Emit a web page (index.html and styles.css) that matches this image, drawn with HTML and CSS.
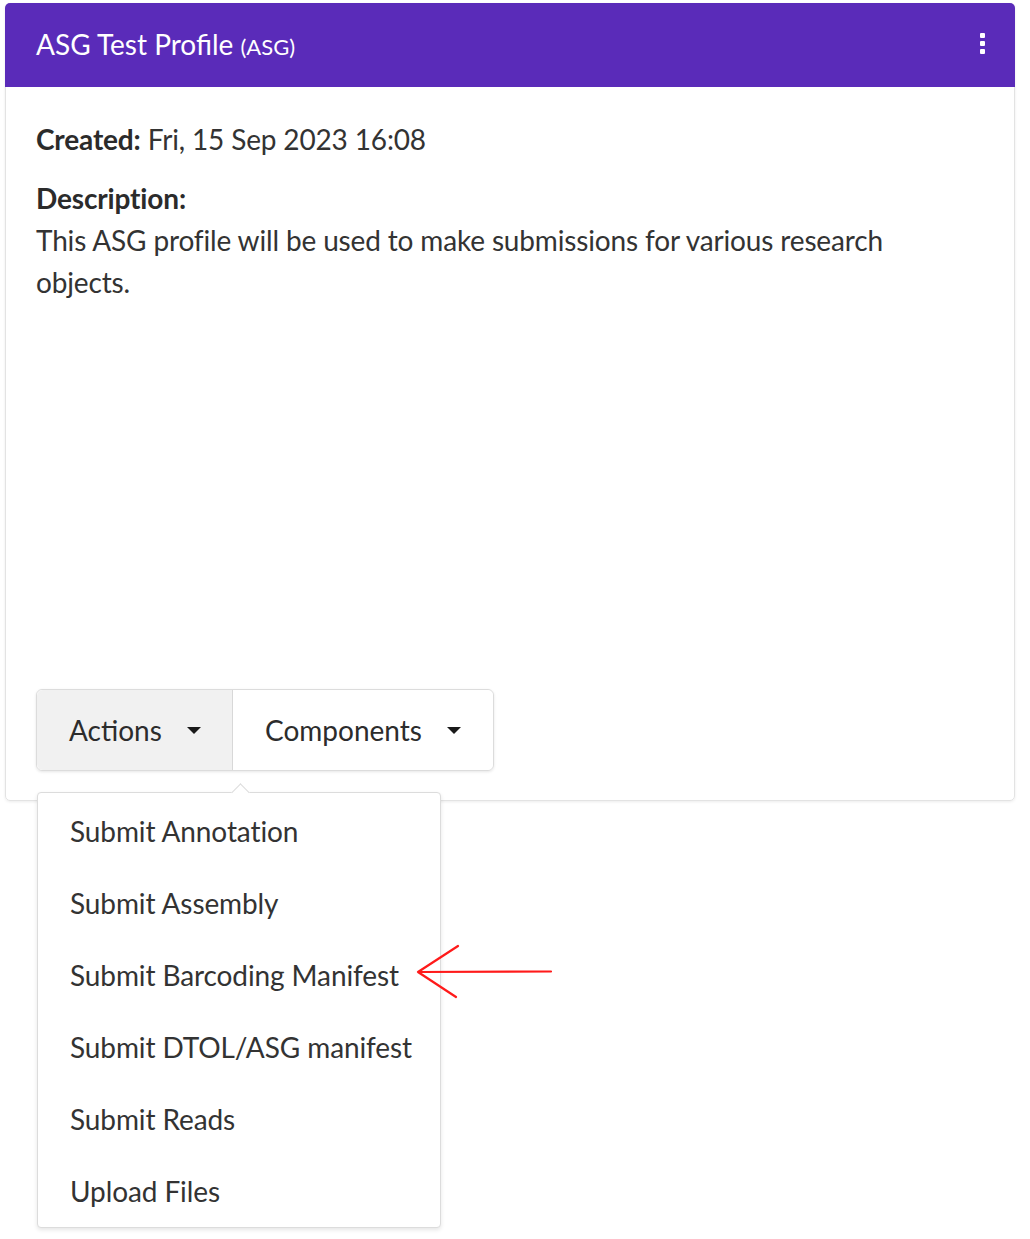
FILE: index.html
```html
<!DOCTYPE html>
<html>
<head>
<meta charset="utf-8">
<link rel="stylesheet" href="styles.css">
</head>
<body>
<div class="page">
  <div class="card">
    <div class="card-header">
      <div class="title">ASG Test Profile <span class="sub">(ASG)</span></div>
      <div class="kebab"><span></span><span></span><span></span></div>
    </div>
    <div class="card-body">
      <p class="line"><b>Created:</b> Fri, 15 Sep 2023 16:08</p>
      <p class="line label"><b>Description:</b></p>
      <p class="line desc">This ASG profile will be used to make submissions for various research objects.</p>
      <div class="btn-group">
        <div class="btn active">Actions <span class="caret"></span></div>
        <div class="btn">Components <span class="caret"></span></div>
        <div class="menu">
          <div class="pointer"></div>
          <div class="item">Submit Annotation</div>
          <div class="item">Submit Assembly</div>
          <div class="item">Submit Barcoding Manifest</div>
          <div class="item">Submit DTOL/ASG manifest</div>
          <div class="item">Submit Reads</div>
          <div class="item">Upload Files</div>
        </div>
      </div>
    </div>
  </div>
  <svg class="annot" width="150" height="60" viewBox="0 0 150 60">
    <path d="M2 28 L135 27.5 M2 28 L42 2 M2 28 L40 53" stroke="#ff1a1a" stroke-width="2.2" fill="none" stroke-linecap="round"/>
  </svg>
</div>
</body>
</html>
```
FILE: styles.css
```css
* { box-sizing: border-box; }
html, body { margin: 0; padding: 0; background: #fff; }
body {
  font-family: Lato, "Noto Sans", "Liberation Sans", sans-serif;
  color: #333;
}
.page {
  position: relative;
  width: 1030px;
  height: 1239px;
  padding: 3px 15px 0 5px;
}
.card {
  width: 1010px;
  height: 798px;
  border: 1px solid #e3e3e3;
  border-radius: 5px;
  box-shadow: 0 1px 3px rgba(0,0,0,0.08);
  display: flex;
  flex-direction: column;
}
.card-header {
  height: 84px;
  margin: -1px -1px 0 -1px;
  background: #5a2bb9;
  border-radius: 5px 5px 0 0;
  display: flex;
  align-items: center;
  justify-content: space-between;
  padding: 0 30px 0 31px;
  color: #fff;
}
.title {
  font-size: 28px;
  letter-spacing: 0;
  padding-bottom: 2px;
}
.title .sub {
  font-size: 22px;
}
.kebab {
  display: flex;
  flex-direction: column;
  gap: 3px;
  padding-bottom: 3px;
}
.kebab span {
  width: 5px;
  height: 5px;
  background: #fff;
  border-radius: 1px;
}
.card-body {
  flex: 1;
  display: flex;
  flex-direction: column;
  padding: 31px 30px 29px 30px;
  font-size: 28px;
  line-height: 42px;
  letter-spacing: -0.15px;
}
.line { margin: 0; }
.line b { font-weight: 700; color: #2b2b2b; }
.label { margin-top: 17px; }
.desc { width: 900px; }
.btn-group {
  position: relative;
  margin-top: auto;
  display: flex;
  align-self: flex-start;
  height: 82px;
  border: 1px solid #dcdcdc;
  border-radius: 6px;
  box-shadow: 0 1px 3px rgba(0,0,0,0.1);
  letter-spacing: 0;
}
.btn {
  display: flex;
  align-items: center;
  padding: 0 32px 0 32px;
  font-size: 28px;
  color: #2c2c2c;
  background: #fff;
  border-radius: 0 6px 6px 0;
}
.btn.active {
  background: #f1f1f1;
  border-right: 1px solid #d8d8d8;
  border-radius: 6px 0 0 6px;
  width: 196px;
}
.caret {
  display: inline-block;
  margin-left: 25px;
  width: 0;
  height: 0;
  border-left: 7px solid transparent;
  border-right: 7px solid transparent;
  border-top: 7px solid #1a1a1a;
}
.menu {
  position: absolute;
  left: 0;
  top: 102px;
  width: 404px;
  background: #fff;
  border: 1px solid #dcdcdc;
  border-radius: 4px;
  box-shadow: 0 2px 4px rgba(0,0,0,0.1);
  padding-top: 2px;
  z-index: 2;
}
.pointer {
  position: absolute;
  top: -7px;
  left: 196px;
  width: 13px;
  height: 13px;
  background: #fff;
  border-left: 1px solid #dcdcdc;
  border-top: 1px solid #dcdcdc;
  transform: rotate(45deg);
}
.item {
  height: 72px;
  display: flex;
  align-items: center;
  padding-left: 32px;
  font-size: 28px;
  color: #333;
  letter-spacing: -0.1px;
}
.annot {
  position: absolute;
  left: 416px;
  top: 944px;
  z-index: 3;
}
```
